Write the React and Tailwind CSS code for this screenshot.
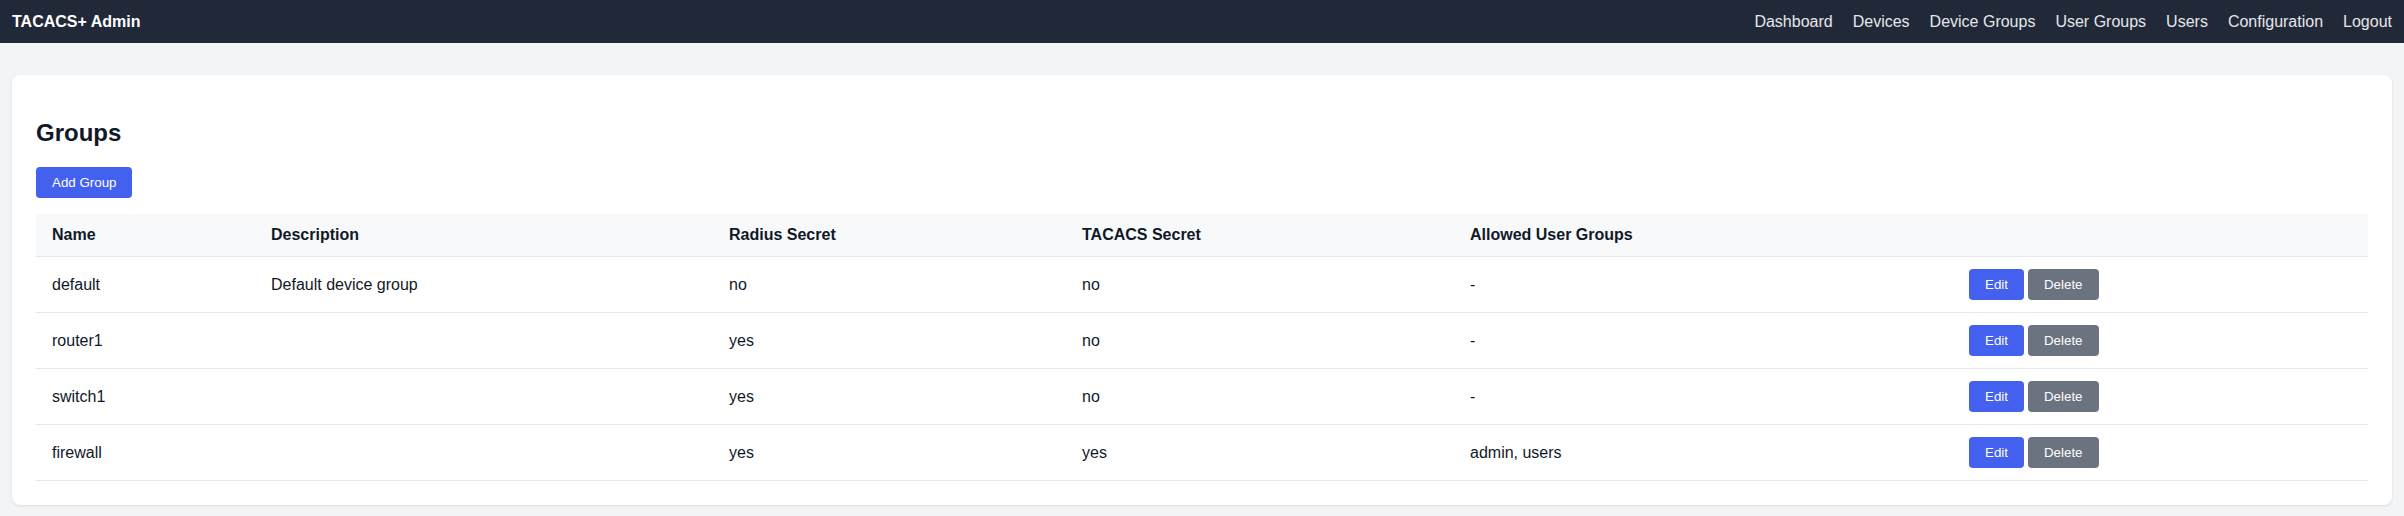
import React from 'react';

const navLinks = ['Dashboard', 'Devices', 'Device Groups', 'User Groups', 'Users', 'Configuration', 'Logout'];

const groups = [
    { name: 'default', description: 'Default device group', radius: 'no', tacacs: 'no', allowed: '-' },
    { name: 'router1', description: '', radius: 'yes', tacacs: 'no', allowed: '-' },
    { name: 'switch1', description: '', radius: 'yes', tacacs: 'no', allowed: '-' },
    { name: 'firewall', description: '', radius: 'yes', tacacs: 'yes', allowed: 'admin, users' },
];

export default function App() {
    return (
        <div className="min-h-[516px] bg-[#f3f4f6] text-[#111827] font-['Liberation_Sans',Arial,sans-serif] pb-[11px]">
            <nav className="h-[43px] bg-[#212837] px-3 flex items-center justify-between">
                <span className="text-white font-bold text-base">TACACS+ Admin</span>
                <div className="flex gap-5">
                    {navLinks.map((link) => (
                        <a key={link} href="#" className="text-[#e5e7eb] text-base leading-[normal]">
                            {link}
                        </a>
                    ))}
                </div>
            </nav>

            <main className="px-3 pt-8">
                <div className="bg-white rounded-lg shadow-[0_1px_3px_rgba(0,0,0,0.1)] p-6">
                    <h2 className="text-2xl font-bold leading-[normal] my-5">Groups</h2>
                    <button className="bg-[#4361ee] text-white text-[13.333px] leading-[normal] px-4 py-2 rounded">
                        Add Group
                    </button>

                    <table className="w-full table-fixed mt-4 text-base leading-[normal] border-collapse">
                        <thead>
                            <tr className="bg-[#f8f9fa] border-b border-[#e5e7eb]">
                                <th className="w-[219px] text-left font-bold px-4 py-3">Name</th>
                                <th className="w-[458px] text-left font-bold px-4 py-3">Description</th>
                                <th className="w-[353px] text-left font-bold px-4 py-3">Radius Secret</th>
                                <th className="w-[388px] text-left font-bold px-4 py-3">TACACS Secret</th>
                                <th className="w-[499px] text-left font-bold px-4 py-3">Allowed User Groups</th>
                                <th className="w-[415px] text-left font-bold px-4 py-3"></th>
                            </tr>
                        </thead>
                        <tbody>
                            {groups.map((group) => (
                                <tr key={group.name} className="border-b border-[#e5e7eb]">
                                    <td className="px-4 py-3">{group.name}</td>
                                    <td className="px-4 py-3">{group.description}</td>
                                    <td className="px-4 py-3">{group.radius}</td>
                                    <td className="px-4 py-3">{group.tacacs}</td>
                                    <td className="px-4 py-3">{group.allowed}</td>
                                    <td className="px-4 py-3">
                                        <div className="flex gap-1">
                                            <button className="bg-[#4361ee] text-white text-[13.333px] leading-[normal] px-4 py-2 rounded">
                                                Edit
                                            </button>
                                            <button className="bg-[#6b7280] text-white text-[13.333px] leading-[normal] px-4 py-2 rounded">
                                                Delete
                                            </button>
                                        </div>
                                    </td>
                                </tr>
                            ))}
                        </tbody>
                    </table>
                </div>
            </main>
        </div>
    );
}
